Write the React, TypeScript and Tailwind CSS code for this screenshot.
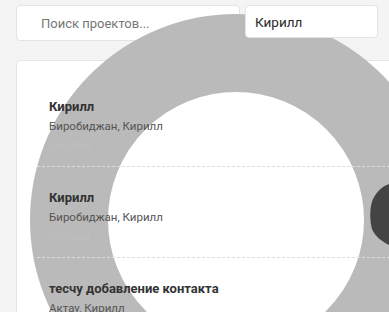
import { useState } from 'react'

type Contact = {
  id: number
  name: string
  place: string
  date: string
}

const contacts: Contact[] = [
  { id: 1, name: 'Кирилл', place: 'Биробиджан, Кирилл', date: 'сегодня' },
  { id: 2, name: 'Кирилл', place: 'Биробиджан, Кирилл', date: 'сегодня' },
  { id: 3, name: 'тесчу добавление контакта', place: 'Актау, Кирилл', date: 'сегодня' },
]

export default function App() {
  const [query, setQuery] = useState('')
  const [owner, setOwner] = useState('Кирилл')

  return (
    <div className="relative h-[312px] w-[389px] overflow-hidden bg-[#f4f4f4] font-['Roboto',sans-serif]">
      <div className="flex items-start pt-[5px]">
        <input
          value={query}
          onChange={(e) => setQuery(e.target.value)}
          placeholder="Поиск проектов..."
          className="ml-4 h-[36px] w-[224px] rounded-[4px] border border-[#e3e3e3] bg-white pl-[24px] text-[13px] text-[#333] outline-none placeholder:text-[#777]"
        />
        <input
          value={owner}
          onChange={(e) => setOwner(e.target.value)}
          className="relative z-20 ml-[5px] h-[33px] w-[133px] rounded-[4px] border border-[#e3e3e3] bg-white pl-[9px] text-[13.5px] text-[#2a2a2a] outline-none"
        />
      </div>

      <div className="ml-4 mt-[19px] w-[400px] rounded-[4px] border border-[#e6e6e6] bg-white pt-[15px]">
        <div className="relative z-20">
          {contacts.map((c) => (
            <div key={c.id} className="ml-5 border-b border-dashed border-[#dcdcdc] pb-[13px] pl-3 pt-[23px]">
              <p className="text-[13px] font-bold leading-4 text-[#333]">{c.name}</p>
              <p className="mt-1 text-[11.5px] leading-[14px] text-[#555]">{c.place}</p>
              <p className="mt-[6px] text-[11px] leading-[14px] text-[#bfbfbf]">{c.date}</p>
            </div>
          ))}
        </div>
      </div>

      {/* loading ring drawn over the list */}
      <div className="pointer-events-none absolute left-[30px] top-[14px] z-10 h-[412px] w-[412px] rounded-full border-[78px] border-[#bababa]" />
      <svg className="pointer-events-none absolute left-[360px] top-[180px] z-10" width="29" height="70" viewBox="360 180 29 70">
        <path d="M389,184 C383,186 377,191 373,199 C369.5,207 369.5,220 372,229 C375,236 381,241 389,245 Z" fill="#444" />
      </svg>
    </div>
  )
}
